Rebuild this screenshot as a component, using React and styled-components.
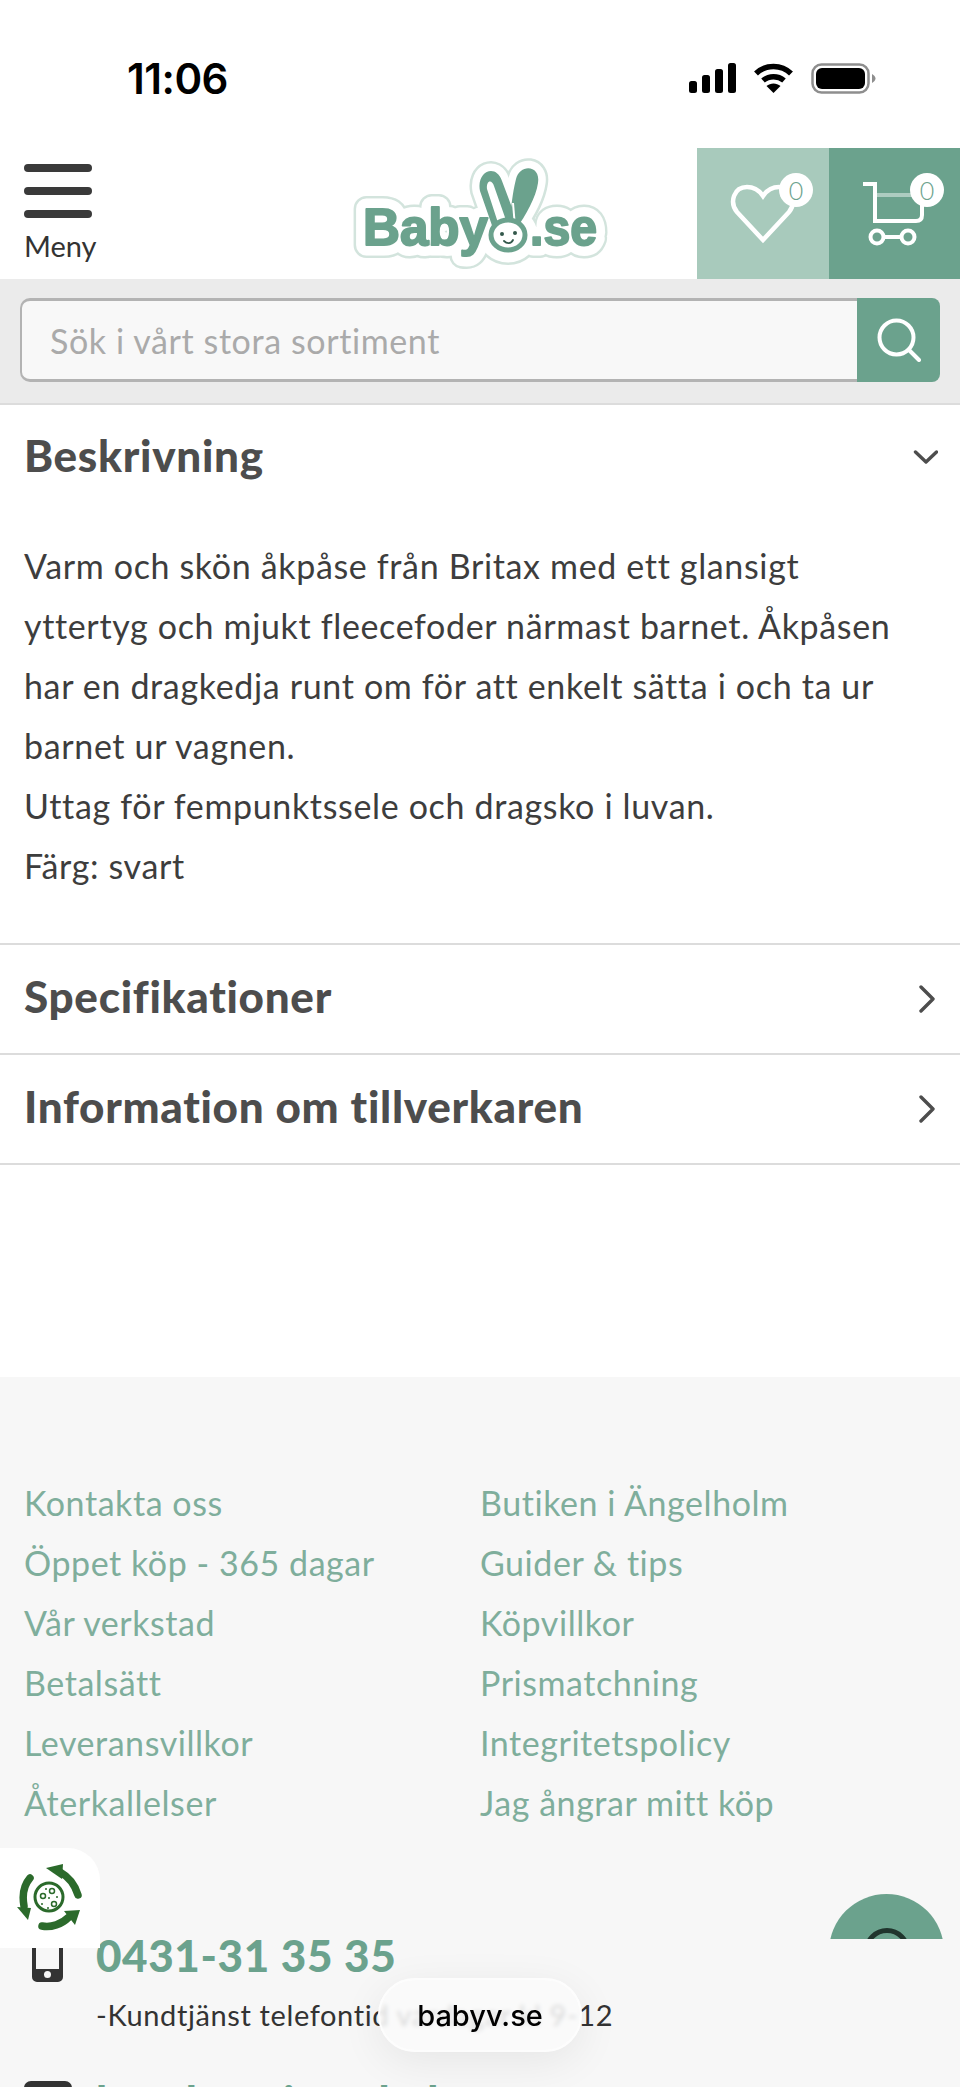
import React from 'react';
import styled, { createGlobalStyle } from 'styled-components';

const green = '#6ba28d';
const text = '#4d4d4d';

const Global = createGlobalStyle`
  html, body {
    margin: 0;
    padding: 0;
    height: 2087px;
    overflow: hidden;
    background: #ffffff;
  }
  * {
    box-sizing: border-box;
  }
`;

const Page = styled.div`
  position: relative;
  width: 960px;
  height: 2087px;
  overflow: hidden;
  font-family: 'Lato', 'Liberation Sans', sans-serif;
  color: ${text};
`;

const StatusBar = styled.div`
  display: flex;
  justify-content: space-between;
  align-items: center;
  height: 148px;
  padding: 8px 84px 0 127px;
`;

const Clock = styled.span`
  font-family: 'Inter', 'Liberation Sans', sans-serif;
  font-size: 42px;
  font-weight: 600;
  color: #000;
  letter-spacing: -0.5px;
`;

const StatusIcons = styled.div`
  display: flex;
  align-items: center;
  gap: 18px;
`;

const Header = styled.header`
  display: flex;
  align-items: stretch;
  height: 131px;
`;

const MenuButton = styled.div`
  display: flex;
  flex-direction: column;
  width: 350px;
  padding: 16px 0 0 24px;
`;

const MenuBar = styled.span`
  display: block;
  width: 68px;
  height: 8px;
  margin-bottom: 15px;
  border-radius: 4px;
  background: #3a3a3a;
`;

const MenuLabel = styled.span`
  margin-top: -4px;
  font-size: 29px;
  line-height: 34px;
  color: #333;
`;

const LogoBox = styled.div`
  flex: 1;
  padding-top: 7px;
`;

const IconTile = styled.div`
  position: relative;
  display: flex;
  align-items: center;
  justify-content: center;
  width: ${(p) => p.$w}px;
  background: ${(p) => p.$bg};
`;

const Count = styled.span`
  position: absolute;
  top: 25px;
  right: 16px;
  display: flex;
  align-items: center;
  justify-content: center;
  width: 34px;
  height: 34px;
  border-radius: 50%;
  background: #fff;
  font-size: 25px;
  font-weight: 300;
  color: ${green};
`;

const SearchBand = styled.div`
  height: 126px;
  padding: 19px 20px 0;
  background: #ebebeb;
  border-bottom: 2px solid #dcdcdc;
`;

const SearchBox = styled.div`
  display: flex;
  height: 84px;
`;

const SearchText = styled.span`
  flex: 1;
  padding-left: 28px;
  border: 3px solid #b3b3b3;
  border-width: 3px 0 3px 2px;
  border-radius: 10px 0 0 10px;
  background: #f8f8f8;
  font-size: 34px;
  line-height: 80px;
  letter-spacing: 0.6px;
  color: #aaa;
`;

const SearchButton = styled.div`
  display: flex;
  align-items: center;
  justify-content: center;
  width: 83px;
  border-radius: 0 8px 8px 0;
  background: ${green};
`;

const Section = styled.section`
  border-bottom: 2px solid #dcdcdc;
`;

const SectionHead = styled.div`
  display: flex;
  justify-content: space-between;
  align-items: center;
  height: ${(p) => p.$h}px;
  padding: 0 22px 0 24px;
`;

const SectionTitle = styled.h2`
  margin: 0 0 6px;
  font-size: 44px;
  font-weight: 900;
  letter-spacing: 0.7px;
  color: ${text};
`;

const Description = styled.div`
  padding: 0 24px 47px;
  margin-top: 25px;
  font-size: 34px;
  line-height: 60px;
  letter-spacing: 0.65px;
  color: #3d3d3d;
`;

const Spacer = styled.div`
  height: 212px;
`;

const Footer = styled.footer`
  height: 800px;
  padding: 96px 24px 0;
  background: #f7f7f7;
`;

const LinkGrid = styled.div`
  display: grid;
  grid-template-columns: 456px 1fr;
`;

const FooterLink = styled.a`
  font-size: 34px;
  line-height: 60px;
  letter-spacing: 0.55px;
  color: #7fae9c;
`;

const ContactRow = styled.div`
  display: flex;
  gap: ${(p) => p.$gap}px;
  margin-top: ${(p) => p.$top}px;
  padding-left: ${(p) => p.$pad}px;
`;

const ContactIcon = styled.div`
  flex: none;
  width: ${(p) => p.$w}px;
  padding-top: ${(p) => p.$offset}px;
`;

const ContactBody = styled.div`
  padding-top: ${(p) => p.$offset}px;
`;

const ContactTitle = styled.div`
  font-size: 44px;
  font-weight: 900;
  line-height: 56px;
  letter-spacing: 0.6px;
  color: ${green};
`;

const ContactNote = styled.div`
  margin-top: 12px;
  font-size: 29px;
  line-height: 40px;
  letter-spacing: 0.62px;
  color: #333;
`;

const RecycleBadge = styled.div`
  position: absolute;
  left: 0;
  top: 1848px;
  display: flex;
  align-items: center;
  justify-content: center;
  width: 100px;
  height: 100px;
  background: #fff;
  border-top-right-radius: 32px;
`;

const ChatClip = styled.div`
  position: absolute;
  left: 829px;
  top: 1894px;
  width: 115px;
  height: 45px;
  overflow: hidden;
`;

const ChatButton = styled.div`
  display: flex;
  justify-content: center;
  width: 115px;
  height: 115px;
  padding-top: 34px;
  border-radius: 50%;
  background: ${green};
`;

const ChatRing = styled.span`
  display: block;
  width: 46px;
  height: 46px;
  border: 5px solid #20352d;
  border-radius: 50%;
`;

const UrlPill = styled.div`
  position: absolute;
  left: 378px;
  top: 1978px;
  display: flex;
  align-items: center;
  justify-content: center;
  width: 204px;
  height: 74px;
  border: 2px solid #fdfdfd;
  border-radius: 37px;
  background: rgba(250, 250, 250, 0.84);
  box-shadow: 0 10px 44px rgba(0, 0, 0, 0.07);
  backdrop-filter: blur(2px);
  font-family: 'Inter', 'Liberation Sans', sans-serif;
  font-size: 29px;
  font-weight: 500;
  color: #000;
`;

const Chevron = ({ dir }) => (
  <svg width="28" height="28" viewBox="0 0 28 28" fill="none" stroke="#4d4d4d" strokeWidth="3.4" strokeLinecap="round" strokeLinejoin="round">
    {dir === 'down' ? <path d="M5.500 8L16 18 26.500 8" /> : <path d="M11 2l12 12-12 12" />}
  </svg>
);

const SignalIcon = () => (
  <svg width="47" height="30" viewBox="0 0 47 30" fill="#000">
    <rect x="0" y="18" width="8" height="12" rx="2.500" />
    <rect x="13" y="12" width="8" height="18" rx="2.500" />
    <rect x="26" y="6" width="8" height="24" rx="2.500" />
    <rect x="39" y="0" width="8" height="30" rx="2.500" />
  </svg>
);

const WifiIcon = () => (
  <svg width="39" height="30" viewBox="0 0 39 30" fill="none" stroke="#000" strokeWidth="5.500">
    <path d="M2 10.500C11.500 1 27.500 1 37 10.500" />
    <path d="M9 17.500C15 12.500 24 12.500 30 17.500" />
    <path d="M19.500 30l-7-7c4-3.500 10-3.500 14 0z" fill="#000" stroke="none" />
  </svg>
);

const BatteryIcon = () => (
  <svg width="65" height="31" viewBox="0 0 65 31">
    <rect x="1.500" y="1.500" width="56" height="28" rx="9" fill="none" stroke="#8e8e8e" strokeWidth="2.500" />
    <rect x="5" y="5" width="49" height="21" rx="6" fill="#000" />
    <path d="M61 11c2 1 3.500 3 3.500 4.500s-1.500 3.500-3.500 4.500z" fill="#8e8e8e" />
  </svg>
);

const LogoWords = () => (
  <>
    <text x="13" y="90" textLength="125" lengthAdjust="spacingAndGlyphs">Baby</text>
    <text x="180" y="90" textLength="67" lengthAdjust="spacingAndGlyphs">.se</text>
  </>
);

const earLeft = 'M130 36C126 16 146 8 152 26L167 66 146 82z';
const earRight = 'M166 24C170 8 191 10 188 28 186 42 176 60 166 74L159 66C162 50 162 40 166 24z';

const LogoBackdrop = ({ color, wordStroke, earStroke }) => (
  <g fill={color} stroke={color}>
    <g strokeWidth={wordStroke}>
      <LogoWords />
      <ellipse cx="158" cy="80" rx="19" ry="17" />
    </g>
    <g strokeWidth={earStroke}>
      <path d={earLeft} />
      <path d={earRight} />
    </g>
  </g>
);

const Logo = () => (
  <svg width="262" height="122" viewBox="0 0 262 122">
    <g fontFamily="'Liberation Sans', sans-serif" fontWeight="700" fontSize="52" strokeLinejoin="round">
      <LogoBackdrop color="#d3e4dd" wordStroke={26} earStroke={20} />
      <LogoBackdrop color="#ffffff" wordStroke={21} earStroke={15} />
      <g fill={green} stroke={green} strokeWidth="2">
        <LogoWords />
      </g>
    </g>
    <path d={earLeft} fill={green} />
    <path d="M137 34c-1-9 5-10 7-3l14 40-8 3z" fill="#fff" />
    <path d={earRight} fill={green} />
    <path d="M163 48l2 24" stroke="#fff" strokeWidth="2" />
    <ellipse cx="158" cy="80" rx="17" ry="15" fill="#fff" stroke={green} strokeWidth="5" />
    <circle cx="152" cy="79" r="2" fill="#33584b" />
    <circle cx="165" cy="78" r="2" fill="#33584b" />
    <path d="M154 86c3 3 7 3 9-1" fill="none" stroke="#33584b" strokeWidth="1.800" strokeLinecap="round" />
  </svg>
);

const Recycle = () => (
  <svg width="66" height="68" viewBox="0 0 66 68" fill="none">
    <g stroke="#2b6a2b" strokeWidth="7.500" strokeLinecap="round">
      <path d="M43 8C52 13 58 21 61 31" />
      <path d="M13 14C7 21 5 31 7 42" />
      <path d="M25 62C34 64 45 60 52 53" />
    </g>
    <g fill="#2b6a2b">
      <path d="M29 4L46 0 45 15z" />
      <path d="M0 43L14 44 11 56z" />
      <path d="M63 46L47 47 58 61z" />
    </g>
    <circle cx="32" cy="33" r="14" fill="#fff" stroke="#2b6a2b" strokeWidth="3" />
    <circle cx="26" cy="32" r="2.500" stroke="#2b6a2b" strokeWidth="1.500" />
    <circle cx="35" cy="27" r="2.500" stroke="#2b6a2b" strokeWidth="1.500" />
    <circle cx="37" cy="40" r="2.500" stroke="#2b6a2b" strokeWidth="1.500" />
    <g fill="#2b6a2b">
      <circle cx="32" cy="34" r="1" />
      <circle cx="29" cy="25" r="1" />
      <circle cx="40" cy="33" r="1" />
      <circle cx="31" cy="44" r="1" />
      <circle cx="25" cy="40" r="1" />
    </g>
  </svg>
);

const Phone = () => (
  <svg width="31" height="62" viewBox="0 0 31 62">
    <path d="M5 0h21a5 5 0 0 1 5 5v52a5 5 0 0 1-5 5H5a5 5 0 0 1-5-5V5a5 5 0 0 1 5-5zM4 8v41h23V8zM15.500 51a3.500 3.500 0 1 0 0 7 3.500 3.500 0 0 0 0-7z" fill="#333" fillRule="evenodd" />
  </svg>
);

const Mail = () => (
  <svg width="48" height="36" viewBox="0 0 48 36">
    <rect width="48" height="36" rx="7" fill="#333" />
  </svg>
);

const leftLinks = ['Kontakta oss', 'Öppet köp - 365 dagar', 'Vår verkstad', 'Betalsätt', 'Leveransvillkor', 'Återkallelser'];
const rightLinks = ['Butiken i Ängelholm', 'Guider & tips', 'Köpvillkor', 'Prismatchning', 'Integritetspolicy', 'Jag ångrar mitt köp'];

const App = () => {
  const links = leftLinks.flatMap((l, i) => [l, rightLinks[i]]);

  return (
    <Page>
      <Global />
      <StatusBar>
        <Clock>11:06</Clock>
        <StatusIcons>
          <SignalIcon />
          <WifiIcon />
          <BatteryIcon />
        </StatusIcons>
      </StatusBar>
      <Header>
        <MenuButton>
          <MenuBar />
          <MenuBar />
          <MenuBar />
          <MenuLabel>Meny</MenuLabel>
        </MenuButton>
        <LogoBox>
          <Logo />
        </LogoBox>
        <IconTile $w={132} $bg="#a8cabc">
          <svg width="66" height="60" viewBox="0 0 66 60" fill="none" stroke="#fff" strokeWidth="4.500" strokeLinejoin="miter">
            <path d="M33 56L7 28C-1 18 4 3 17 3c7 0 12 3 16 9 4-6 9-9 16-9 13 0 18 15 10 25z" />
          </svg>
          <Count>0</Count>
        </IconTile>
        <IconTile $w={131} $bg={green}>
          <svg width="66" height="64" viewBox="0 0 66 64" fill="none" stroke="#fff" strokeWidth="4">
            <path d="M1 2H13V39H54Q60 39 60 33V14" />
            <path d="M13 13H58" strokeOpacity="0.45" />
            <circle cx="15" cy="55" r="6.500" />
            <circle cx="46" cy="55" r="6.500" />
            <path d="M21.500 55H39.500" />
          </svg>
          <Count>0</Count>
        </IconTile>
      </Header>
      <SearchBand>
        <SearchBox>
          <SearchText>Sök i vårt stora sortiment</SearchText>
          <SearchButton>
            <svg width="44" height="44" viewBox="0 0 44 44" fill="none" stroke="#fff" strokeWidth="4" strokeLinecap="round">
              <circle cx="19.500" cy="19.500" r="17" />
              <path d="M32 32l10 10" />
            </svg>
          </SearchButton>
        </SearchBox>
      </SearchBand>
      <Section>
        <SectionHead $h={106}>
          <SectionTitle>Beskrivning</SectionTitle>
          <Chevron dir="down" />
        </SectionHead>
        <Description>
          Varm och skön åkpåse från Britax med ett glansigt
          <br />
          yttertyg och mjukt fleecefoder närmast barnet. Åkpåsen
          <br />
          har en dragkedja runt om för att enkelt sätta i och ta ur
          <br />
          barnet ur vagnen.
          <br />
          Uttag för fempunktssele och dragsko i luvan.
          <br />
          Färg: svart
        </Description>
      </Section>
      <Section>
        <SectionHead $h={108}>
          <SectionTitle>Specifikationer</SectionTitle>
          <Chevron dir="right" />
        </SectionHead>
      </Section>
      <Section>
        <SectionHead $h={108}>
          <SectionTitle>Information om tillverkaren</SectionTitle>
          <Chevron dir="right" />
        </SectionHead>
      </Section>
      <Spacer />
      <Footer>
        <LinkGrid>
          {links.map((l) => (
            <FooterLink key={l}>{l}</FooterLink>
          ))}
        </LinkGrid>
        <ContactRow $top={87} $pad={8} $gap={33}>
          <ContactIcon $w={31} $offset={0}>
            <Phone />
          </ContactIcon>
          <ContactBody $offset={7}>
            <ContactTitle>0431-31 35 35</ContactTitle>
            <ContactNote>-Kundtjänst telefontid vardagar kl 9-12</ContactNote>
          </ContactBody>
        </ContactRow>
        <ContactRow $top={38} $pad={0} $gap={24}>
          <ContactIcon $w={48} $offset={8}>
            <Mail />
          </ContactIcon>
          <ContactBody $offset={0}>
            <ContactTitle>kundservice@babyv.se</ContactTitle>
          </ContactBody>
        </ContactRow>
      </Footer>
      <RecycleBadge>
        <Recycle />
      </RecycleBadge>
      <ChatClip>
        <ChatButton>
          <ChatRing />
        </ChatButton>
      </ChatClip>
      <UrlPill>babyv.se</UrlPill>
    </Page>
  );
};

export default App;
